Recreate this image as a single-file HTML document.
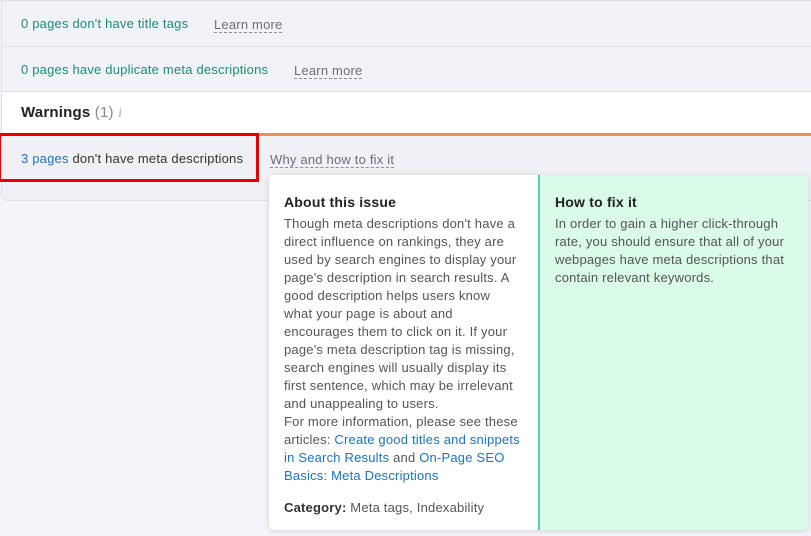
<!DOCTYPE html>
<html><head><style>
*{margin:0;padding:0;box-sizing:border-box}
body{width:811px;height:536px;overflow:hidden;background:#f4f5f9;font-family:"Liberation Sans",Arial,sans-serif;font-size:13px;letter-spacing:0.2px;position:relative;color:#333}
.card{position:absolute;left:1px;top:0;width:820px;height:201px;border:1px solid #dfe1e6;border-radius:0 0 6px 6px;background:#f0f1f5}
.row{position:absolute;left:0;right:0;height:45px;border-bottom:1px solid #dfe1e6;background:#f2f3f6}
.t{position:absolute;top:15px;white-space:nowrap}
.g{color:#1e8a7a}
.lm{color:#6b6e7b;border-bottom:1px dashed #8a8d99;line-height:15px}
.pop{position:absolute;left:269px;top:175px;width:539px;height:355px;border-radius:5px;box-shadow:0 1px 6px rgba(0,0,0,.15);background:#fff;overflow:hidden}
.l{position:absolute;left:0;top:0;width:269px;height:100%;padding:19px 15px}
.r{position:absolute;left:269px;top:0;right:0;height:100%;background:#d9fbe8;border-left:2px solid #50d3a0;padding:19px 15px}
h3{font-size:14px;color:#222;margin-bottom:5px}
p{line-height:18px;color:#555;white-space:nowrap}
a{color:#1a73c8;text-decoration:none}
</style></head><body>
<div class="card">
 <div class="row" style="top:0;height:46px"><span class="t g" style="left:19px;top:15px">0 pages don't have title tags</span><span class="t lm" style="left:212px;top:16px">Learn more</span></div>
 <div class="row" style="top:46px"><span class="t g" style="left:19px;top:15px">0 pages have duplicate meta descriptions</span><span class="t lm" style="left:292px;top:16px">Learn more</span></div>
 <div style="position:absolute;left:0;right:0;top:91px;height:42px;background:#fff">
  <span class="t" style="left:19px;top:12px;font-size:15px;color:#222"><b>Warnings</b> <span style="color:#888">(1)</span> <span style="color:#aaa;font-family:'Liberation Serif',serif;font-style:italic;font-size:14px">i</span></span>
 </div>
 <div style="position:absolute;left:-1px;right:0;top:132px;height:3px;background:#ff8c3c"></div>
 <div style="position:absolute;left:0;right:0;top:135px;height:45px;background:#f0f1f5">
  <span class="t" style="left:19px;top:15px"><a>3 pages</a> <span style="color:#333">don't have meta descriptions</span></span>
  <span class="t lm" style="left:268px;top:16px">Why and how to fix it</span>
 </div>
</div>
<div style="position:absolute;left:-2px;top:133px;width:261px;height:49px;border:3px solid #e60000"></div>
<div class="pop">
 <div class="l"><h3>About this issue</h3>
 <p>Though meta descriptions don't have a<br>direct influence on rankings, they are<br>used by search engines to display your<br>page's description in search results. A<br>good description helps users know<br>what your page is about and<br>encourages them to click on it. If your<br>page's meta description tag is missing,<br>search engines will usually display its<br>first sentence, which may be irrelevant<br>and unappealing to users.<br>For more information, please see these<br>articles: <a>Create good titles and snippets</a><br><a>in Search Results</a> and <a>On-Page SEO</a><br><a>Basics: Meta Descriptions</a></p>
 <p style="margin-top:14px"><b style="color:#333">Category:</b> Meta tags, Indexability</p></div>
 <div class="r"><h3>How to fix it</h3><p>In order to gain a higher click-through<br>rate, you should ensure that all of your<br>webpages have meta descriptions that<br>contain relevant keywords.</p></div>
</div>
</body></html>
